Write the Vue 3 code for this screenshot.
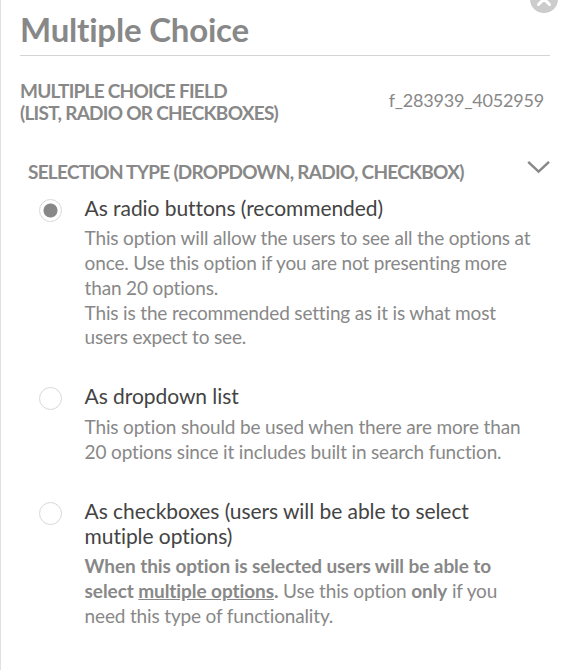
<script setup>
import { ref } from 'vue'
const fieldId = 'f_283939_4052959'
const selected = ref('radio')
const open = ref(true)
</script>
<template>
  <div class="panel">
    <button class="close" aria-label="Close">
      <svg width="28" height="28" viewBox="0 0 28 28">
        <circle cx="14" cy="14" r="14" fill="#cccccc" />
        <path d="M8.5 8.5L19.5 19.5M19.5 8.5L8.5 19.5" stroke="#fff" stroke-width="3" stroke-linecap="round" />
      </svg>
    </button>
    <h1>Multiple Choice</h1>
    <div class="field">
      <div class="label">MULTIPLE CHOICE FIELD<br>(LIST, RADIO OR CHECKBOXES)</div>
      <div class="field-id">{{ fieldId }}</div>
    </div>
    <div class="section-head" @click="open = !open">
      <div class="label">SELECTION TYPE (DROPDOWN, RADIO, CHECKBOX)</div>
      <svg class="chevron" width="24" height="14" viewBox="0 0 24 14">
        <path d="M2.2 1.8L12.6 11.6L23 1.8" fill="none" stroke="#888" stroke-width="2.5" />
      </svg>
    </div>
    <div v-if="open" class="options">
      <div class="option" @click="selected = 'radio'">
        <span :class="['radio', selected === 'radio' ? 'checked' : '']"></span>
        <div class="text">
          <div class="name">As radio buttons (recommended)</div>
          <div class="desc">This option will allow the users to see all the options at<br>once. Use this option if you are not presenting more<br>than 20 options.<br>This is the recommended setting as it is what most<br>users expect to see.</div>
        </div>
      </div>
      <div class="option" @click="selected = 'dropdown'">
        <span :class="['radio', selected === 'dropdown' ? 'checked' : '']"></span>
        <div class="text">
          <div class="name">As dropdown list</div>
          <div class="desc">This option should be used when there are more than<br>20 options since it includes built in search function.</div>
        </div>
      </div>
      <div class="option" @click="selected = 'checkbox'">
        <span :class="['radio', selected === 'checkbox' ? 'checked' : '']"></span>
        <div class="text">
          <div class="name">As checkboxes (users will be able to select<br>mutiple options)</div>
          <div class="desc"><b>When this option is selected users will be able to<br>select <u>multiple options</u>.</b> Use this option <b>only</b> if you<br>need this type of functionality.</div>
        </div>
      </div>
    </div>
  </div>
</template>
<style>
body{
    margin: 0;
    background: #fff;
    overflow: hidden;
}
</style>
<style scoped>
.panel{
    position: relative;
    box-sizing: border-box;
    height: 670px;
    padding: 7px 27px 0 19px;
    border-left: 1px solid #e0e0e0;
    font-family: Lato, sans-serif;
    font-variant-ligatures: none;
    color: #888;
    white-space: nowrap;
    .close{
        position: absolute;
        top: -15px;
        left: 529px;
        width: 28px;
        height: 28px;
        padding: 0;
        border: 0;
        background: none;
        svg{
            display: block;
        }
    }
}
h1{
    margin: 0;
    height: 48px;
    line-height: 45px;
    font-size: 33px;
    font-weight: 700;
    letter-spacing: -0.2px;
    border-bottom: 1px solid #d4d4d4;
}
.label{
    font-size: 19px;
    line-height: 22px;
    font-weight: 700;
    letter-spacing: -0.74px;
}
.field{
    display: flex;
    justify-content: space-between;
    align-items: center;
    margin-top: 24px;
    padding-right: 6px;
    .field-id{
        font-size: 18px;
        line-height: 24px;
        margin-top: -5px;
        letter-spacing: -0.2px;
    }
}
.section-head{
    display: flex;
    justify-content: space-between;
    margin-top: 37px;
    padding-left: 8px;
    .chevron{
        margin-top: -1px;
    }
}
.options{
    padding-left: 19px;
    margin-top: 12px;
}
.option{
    display: flex;
    gap: 22.6px;
    margin-bottom: 33.5px;
    .radio{
        box-sizing: border-box;
        flex: none;
        width: 23px;
        height: 23px;
        margin-top: 4px;
        border: 1px solid #d8d8d8;
        border-radius: 50%;
        &.checked{
            background: radial-gradient(circle, #888 6.6px, #fff 7.4px);
        }
    }
    .name{
        font-size: 21px;
        line-height: 25px;
        letter-spacing: -0.06px;
        color: #444;
    }
    .desc{
        margin-top: 6.4px;
        font-size: 19px;
        line-height: 24.7px;
        letter-spacing: -0.16px;
        b{
            letter-spacing: -0.08px;
        }
    }
}
</style>
